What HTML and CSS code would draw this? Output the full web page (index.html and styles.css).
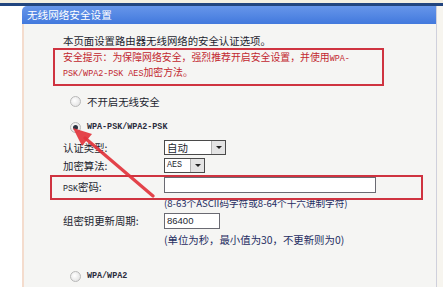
FILE: index.html
```html
<!DOCTYPE html>
<html lang="zh-CN">
<head>
<meta charset="utf-8">
<title>无线网络安全设置</title>
<link rel="stylesheet" href="styles.css">
</head>
<body>
<div class="topline"></div>
<div class="frame">
  <div class="gutter"></div>
  <div class="panel">
    <div class="header">无线网络安全设置</div>
    <div class="body">
      <div class="row intro">本页面设置路由器无线网络的安全认证选项。</div>
      <div class="redbox warn">
        <div class="wline">安全提示：为保障网络安全，强烈推荐开启安全设置，并使用<span class="lat">WPA-</span></div>
        <div class="wline"><span class="lat">PSK/WPA2-PSK AES</span>加密方法。</div>
      </div>
      <div class="row radio r1"><span class="dot"></span><span>不开启无线安全</span></div>
      <div class="row radio r2"><span class="dot on"></span><span class="lat dark">WPA-PSK/WPA2-PSK</span></div>
      <div class="row field f1"><span class="label">认证类型:</span><span class="select s-auto"><span class="val">自动</span><span class="btn"></span></span></div>
      <div class="row field f2"><span class="label">加密算法:</span><span class="select s-aes"><span class="val lat">AES</span><span class="btn"></span></span></div>
      <div class="redbox pskbox">
        <div class="row field f3"><span class="label"><span class="lat">PSK</span>密码:</span><span class="input i-psk"></span></div>
      </div>
      <div class="row hint h1">(8-63个ASCII码字符或8-64个十六进制字符)</div>
      <div class="row field f4"><span class="label">组密钥更新周期:</span><span class="input i-grp">86400</span></div>
      <div class="row hint h2">(单位为秒，最小值为30，不更新则为0)</div>
      <div class="row radio r3"><span class="dot"></span><span class="lat dark">WPA/WPA2</span></div>
    </div>
  </div>
  <div class="rightstrip"></div>
</div>
<svg class="arrow" width="443" height="287" viewBox="0 0 443 287">
  <line x1="153" y1="196" x2="85" y2="138" stroke="#e2343c" stroke-width="3.2" stroke-linecap="round" opacity="0.92"/>
  <polygon points="73,128 82,146 92,134" fill="#e2343c" opacity="0.92"/>
</svg>
</body>
</html>
```
FILE: styles.css
```css
html, body {
  margin: 0;
  padding: 0;
  background: #ffffff;
}
body {
  width: 443px;
  height: 287px;
  overflow: hidden;
  position: relative;
  font-family: "Noto Sans CJK SC", "Liberation Sans", sans-serif;
  font-size: 10.4px;
  color: #1d1f30;
}
.topline {
  height: 3px;
  background: #f3efe2;
  border-bottom: 3px solid #22457f;
}
.frame {
  display: flex;
  height: 281px;
}
.gutter {
  width: 22px;
  background: #ffffff;
}
.panel {
  width: 414px;
  display: flex;
  flex-direction: column;
  border-right: 1px solid #cfd0dc;
}
.header {
  height: 18px;
  line-height: 18px;
  background: linear-gradient(#6796ea, #4279dd);
  color: #ffffff;
  padding-left: 5px;
  border-top-left-radius: 5px;
  font-size: 10.6px;
}
.body {
  flex: 1;
  background: #f5f5f3;
  border-left: 2px solid #f4dccd;
  padding-left: 39px;
  display: flex;
  flex-direction: column;
}
.row {
  display: flex;
  align-items: center;
}
.lat {
  font-family: "Liberation Mono", monospace;
  font-size: 8.4px;
}
.dark {
  font-weight: bold;
  color: #2a2c3c;
}
.intro {
  margin-top: 9px;
  height: 15px;
}
.redbox {
  border: 2px solid #cf3340;
}
.warn {
  margin-left: -10px;
  width: 319px;
  padding: 0 0 4px 8px;
  color: #c2272f;
  font-size: 9.9px;
}
.wline {
  height: 15px;
  line-height: 15px;
}
.radio {
  padding-left: 7px;
  height: 16px;
}
.r1 { margin-top: 7px; }
.r2 { margin-top: 10px; }
.r3 { margin-top: 22px; }
.dot {
  width: 9px;
  height: 9px;
  border-radius: 50%;
  border: 1px solid #b8b8b8;
  background: radial-gradient(circle at 40% 40%, #ffffff, #dcdcdc);
  margin-right: 6px;
  position: relative;
}
.dot.on::after {
  content: "";
  position: absolute;
  left: 2px;
  top: 2px;
  width: 5px;
  height: 5px;
  border-radius: 50%;
  background: #2d3340;
}
.field {
  height: 17px;
}
.label {
  width: 101px;
  flex: none;
}
.f1 { margin-top: 4px; }
.f2 { height: 16px; margin-top: 1px; }
.select {
  display: flex;
  height: 13px;
  border: 1px solid #4a4a4a;
  background: #ffffff;
}
.select .val {
  flex: 1;
  padding-left: 2px;
  line-height: 13px;
}
.select .btn {
  width: 13px;
  background: #e4e4e4;
  border-left: 1px solid #b0b0b0;
  position: relative;
}
.select .btn::after {
  content: "";
  position: absolute;
  left: 4px;
  top: 5px;
  border-left: 3px solid transparent;
  border-right: 3px solid transparent;
  border-top: 3px solid #222222;
}
.s-auto { width: 60px; }
.s-aes { width: 39px; }
.pskbox {
  margin-top: 2px;
  margin-left: -13px;
  width: 358px;
  padding: 0 0 3px 11px;
  height: 18px;
  position: relative;
  z-index: 1;
}
.f3 { height: 18px; }
.input {
  height: 14px;
  line-height: 14px;
  border: 1px solid #6a6a72;
  background: #ffffff;
  padding-left: 2px;
  font-family: "Liberation Sans", sans-serif;
  font-size: 9.5px;
}
.i-psk {
  width: 208px;
  margin-top: -3px;
}
.i-grp { width: 52px; }
.hint {
  padding-left: 101px;
  color: #1f2d62;
}
.h1 {
  margin-top: -3px;
  height: 12px;
  font-size: 9.6px;
}
.f4 { margin-top: 3px; }
.h2 {
  margin-top: 3px;
  height: 14px;
}
.rightstrip {
  flex: 1;
  background: #f7f5ef;
}
.arrow {
  position: absolute;
  left: 0;
  top: 0;
  pointer-events: none;
  z-index: 5;
}
```
